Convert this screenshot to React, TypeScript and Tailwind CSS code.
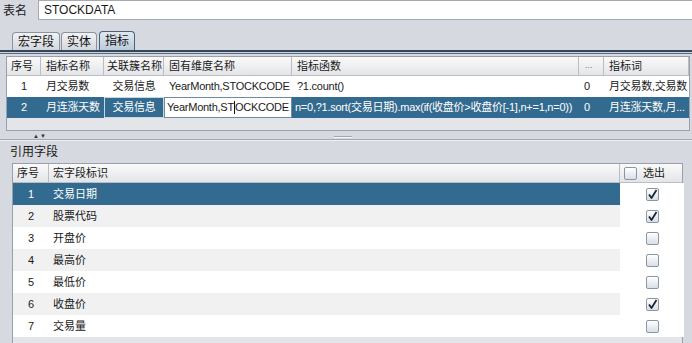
import { Fragment } from 'react';

const font = { fontFamily: '"Liberation Sans", "Noto Sans CJK SC", sans-serif' };

const topCols = 'grid grid-cols-[34px_63px_60px_128px_287px_25px_85px]';
const bottomCols = 'grid grid-cols-[36px_571px_64px]';
const cell = 'flex items-center whitespace-nowrap overflow-hidden min-w-0';

const topHeaders = ['序号', '指标名称', '关联簇名称', '固有维度名称', '指标函数', '...', '指标词'];

const fields = [
  { no: 1, name: '交易日期', checked: true },
  { no: 2, name: '股票代码', checked: true },
  { no: 3, name: '开盘价', checked: false },
  { no: 4, name: '最高价', checked: false },
  { no: 5, name: '最低价', checked: false },
  { no: 6, name: '收盘价', checked: true },
  { no: 7, name: '交易量', checked: false },
];

function CheckBox({ checked }: { checked: boolean }) {
  return (
    <div className="w-[13px] h-[13px] shrink-0 rounded-[2px] border border-[#8996a4] bg-gradient-to-b from-[#ffffff] to-[#d9dfe6] flex items-center justify-center">
      {checked && (
        <svg width="11" height="11" viewBox="0 0 11 11">
          <path d="M2 5.5 L4.5 9 L9.5 1" fill="none" stroke="#1c2838" strokeWidth="1.8" strokeLinejoin="round" />
        </svg>
      )}
    </div>
  );
}

function Tab({ label, active }: { label: string; active?: boolean }) {
  return (
    <div
      className={
        active
          ? 'h-[19px] px-[5px] flex items-center rounded-t-[4px] border border-b-0 border-[#4d6179] bg-gradient-to-b from-[#dfe8f0] to-[#bccbda] text-[#111]'
          : 'h-[18px] px-[5px] flex items-center rounded-t-[4px] border border-b-0 border-[#8b939d] bg-gradient-to-b from-[#f1f2f4] to-[#d3d7dc] text-[#111]'
      }
    >
      {label}
    </div>
  );
}

export default function App() {
  return (
    <div className="w-[692px] h-[343px] overflow-hidden bg-[#d6d9df] text-[12px] text-[#1a1a1a] flex flex-col" style={font}>
      {/* table name */}
      <div className="h-[21px] flex items-stretch">
        <div className="w-[38px] pl-[3px] flex items-center">表名</div>
        <div className="flex-1 h-[20px] bg-white border border-[#a6abb3] border-r-0 pl-[5px] flex items-center">STOCKDATA</div>
      </div>

      {/* tabs */}
      <div className="mt-[10px] h-[19px] pl-[12px] flex items-end gap-[1px]">
        <Tab label="宏字段" />
        <Tab label="实体" />
        <div className="ml-[1px]">
          <Tab label="指标" active />
        </div>
      </div>
      <div className="h-[4px] border-t-2 border-t-[#34465a] border-b border-b-[#5c6c7e] bg-[#c6d2de]" />

      {/* top table */}
      <div className="mt-[2px] ml-[6px] w-[684px] border border-[#98a1ab] bg-[#e3e5e9] text-[11px]">
        <div className={`${topCols} h-[19px] bg-gradient-to-b from-[#fafafa] to-[#e4e5e8] border-b border-[#b9bec5]`}>
          {topHeaders.map((h, i) => (
            <div
              key={h}
              className={`${cell} border-r border-[#b9bec5] ${i === 0 ? 'pl-[4px]' : i === 2 ? 'pl-[3px]' : 'pl-[5px]'} ${h === '...' ? 'text-[#777] text-[9px] pl-[6px]' : ''}`}
            >
              {h}
            </div>
          ))}
        </div>
        <div className={`${topCols} h-[21px] bg-white tracking-[-0.25px]`}>
          <div className={`${cell} justify-center`}>1</div>
          <div className={`${cell} pl-[5px]`}>月交易数</div>
          <div className={`${cell} justify-center`}>交易信息</div>
          <div className={`${cell} pl-[5px]`}>YearMonth,STOCKCODE</div>
          <div className={`${cell} pl-[5px]`}>?1.count()</div>
          <div className={`${cell} pl-[5px]`}>0</div>
          <div className={`${cell} pl-[5px]`}>月交易数,交易数</div>
        </div>
        <div className={`${topCols} h-[21px] bg-[#336a90] text-white tracking-[-0.25px]`}>
          <div className={`${cell} justify-center`}>2</div>
          <div className={`${cell} pl-[5px]`}>月连涨天数</div>
          <div className={`${cell} justify-center border border-[#c9d7e3]`}>交易信息</div>
          <div className={`${cell} pl-[2px] bg-white text-[#1a1a1a] border border-[#6f8aa3]`}>
            YearMonth,ST<span className="inline-block w-[1px] h-[13px] bg-[#111]" />OCKCODE
          </div>
          <div className={`${cell} pl-[3px]`}>n=0,?1.sort(交易日期).max(if(收盘价&gt;收盘价[-1],n+=1,n=0))</div>
          <div className={`${cell} pl-[5px]`}>0</div>
          <div className={`${cell} pl-[5px]`}>月连涨天数,月...</div>
        </div>
        <div className="h-[12px]" />
      </div>

      {/* splitter */}
      <div className="h-[10px] relative flex items-end">
        <div className="w-full h-[2px] border-t border-[#a2a8b0] bg-[#eceef1]" />
        <div className="absolute left-[33px] top-[2px] text-[6px] leading-none text-[#333] tracking-[1px]">▲▼</div>
        <div className="absolute left-[334px] top-[5px] w-[18px] h-[2px] border-t border-[#a2a8b0] border-b border-b-[#f4f5f7]" />
      </div>

      {/* referenced fields */}
      <div className="h-[22px] pl-[10px] flex items-center">引用字段</div>

      <div className="ml-[12px] w-[671px] flex-1 border border-[#98a1ab] border-b-0 bg-[#e3e5e9] text-[11px]">
        <div className={`${bottomCols} h-[19px] bg-gradient-to-b from-[#fafafa] to-[#e4e5e8] border-b border-[#b9bec5]`}>
          <div className={`${cell} pl-[4px] border-r border-[#b9bec5]`}>序号</div>
          <div className={`${cell} pl-[4px] border-r border-[#b9bec5]`}>宏字段标识</div>
          <div className={`${cell} pl-[4px] gap-[6px]`}>
            <CheckBox checked={false} />
            <span>选出</span>
          </div>
        </div>
        {fields.map((f) => {
          const selected = f.no === 1;
          const bg = selected ? 'bg-[#336a90] text-white' : f.no % 2 === 0 ? 'bg-[#f1f1f2]' : 'bg-white';
          return (
            <Fragment key={f.no}>
              <div className={`${bottomCols} h-[22px]`}>
                <div className={`${cell} justify-center ${bg}`}>{f.no}</div>
                <div className={`${cell} pl-[4px] ${bg}`}>{f.name}</div>
                <div className={`${cell} justify-center bg-white`}>
                  <CheckBox checked={f.checked} />
                </div>
              </div>
            </Fragment>
          );
        })}
      </div>
    </div>
  );
}
